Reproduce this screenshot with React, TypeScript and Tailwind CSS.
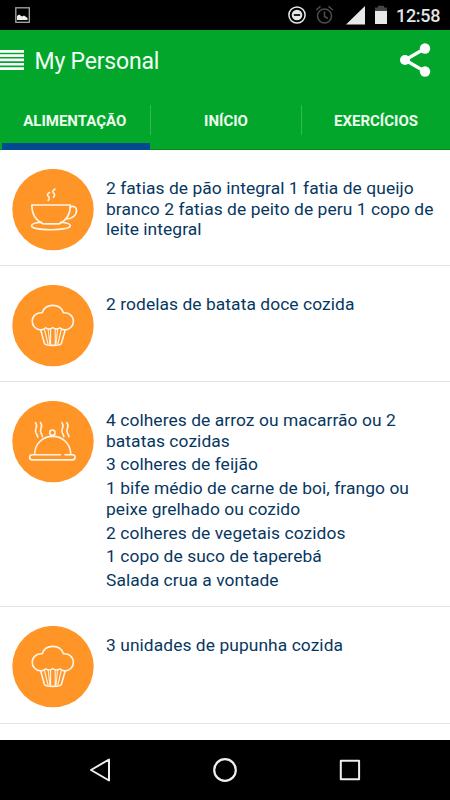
import React from 'react';

type IconName = 'cup' | 'muffin' | 'dish';

interface Meal {
  icon: IconName;
  height: string;
  lines: string[][];
}

const meals: Meal[] = [
  {
    icon: 'cup',
    height: 'h-[116px] pt-[19px]',
    lines: [['2 fatias de pão integral 1 fatia de queijo', 'branco 2 fatias de peito de peru 1 copo de', 'leite integral']],
  },
  { icon: 'muffin', height: 'h-[116px] pt-[19px]', lines: [['2 rodelas de batata doce cozida']] },
  {
    icon: 'dish',
    height: 'h-[225px] pt-[19px]',
    lines: [
      ['4 colheres de arroz ou macarrão ou 2', 'batatas cozidas'],
      ['3 colheres de feijão'],
      ['1 bife médio de carne de boi, frango ou', 'peixe grelhado ou cozido'],
      ['2 colheres de vegetais cozidos'],
      ['1 copo de suco de taperebá'],
      ['Salada crua a vontade'],
    ],
  },
  { icon: 'muffin', height: 'h-[117px] pt-[19px]', lines: [['3 unidades de pupunha cozida']] },
];

function MealIcon({ name }: { name: IconName }) {
  return (
    <svg
      viewBox="0 0 82 82"
      className="h-[82px] w-[82px] shrink-0"
      fill="none"
      stroke="#fff4e6"
      strokeWidth="1.6"
      strokeLinecap="round"
      strokeLinejoin="round"
    >
      <circle cx="41" cy="40.600" r="40.700" fill="#ff9526" stroke="none" />
      {name === 'cup' && (
        <>
          <path d="M19.800 36h38.600c0 9.500-4.700 16-11.500 18.900H31.300C24.500 52 19.800 45.500 19.800 36z" />
          <path d="M58 38.300c3-1.800 6.500-.8 6.500 3.200 0 5-4.500 8.500-11 8.500" />
          <path d="M29.500 53.200c-5.500.4-9.900 1.600-9.900 3.500 0 2.500 8.700 4 19.400 4s19.400-1.500 19.400-4c0-1.900-4.300-3.100-9.800-3.500" />
          <path d="M37.600 23.500c-2.800 1.600-2.500 2.800-1.200 3.900s1.200 2.500-.2 4" />
          <path d="M42.900 20.200c-2.800 1.600-2.500 2.800-1.200 3.900s1.200 2.500-.2 4" />
        </>
      )}
      {name === 'muffin' && (
        <>
          <path d="M28 44.800C23.500 44.300 20.200 40.700 20.200 36.200c0-5.200 4.600-9 10-8.400C31.500 23.500 35.500 20.400 40.800 20.400S50.100 23.500 51.400 27.800c5.500-.6 10 3.200 10 8.400 0 4.500-3.200 8.100-7.700 8.600-2.600.3-4.600-.6-5.900-2-2.200 1.500-4.900 1.500-7-.3-2.200 1.800-4.900 1.800-7 .3-1.300 1.400-3.200 2.300-5.800 2z" />
          <path d="M28.700 45l3.700 13.300c.8 2.800 16.200 2.800 17 0L53.200 45" />
          <path d="M32.500 44.500l3.500 14.500M36.200 44l1.600 15M38.600 43.500v16.500M43.200 43.500v16.500M45.600 44l-1.600 15M49.300 44.500l-3.500 14.500" strokeWidth="1.100" />
        </>
      )}
      {name === 'dish' && (
        <>
          <path d="M22.700 53.500c0-10.500 7.700-18.100 18-18.100s18 7.600 18 18.100" />
          <circle cx="40.400" cy="31.700" r="2.700" />
          <path d="M53 53.700h7.500a2.600 2.600 0 0 1 0 5.200H20.200a2.600 2.600 0 0 1 0-5.200H48.500" />
          <path d="M23.500 21.700c3.800 4.500-2.200 6 .6 10.500 1 1.500 1.500 2.500 1.700 4M28.500 21.700c3.800 4.500-2.200 6 .6 10.500 1 1.500 1.300 2.200 1.300 3.500" />
          <path d="M49.900 21.700c3.800 4.500-2.200 6 .6 10.500 1 1.500 1.300 2.200 1.300 3.500M54.900 21.700c3.800 4.500-2.200 6 .6 10.500 1 1.500 1.300 2.200 1.300 3.500" />
        </>
      )}
    </svg>
  );
}

function StatusBar() {
  return (
    <div className="flex h-[30px] items-center bg-black">
      <svg viewBox="0 0 450 30" className="h-[30px] w-[394px] shrink-0" preserveAspectRatio="xMinYMin slice">
        <rect x="15.800" y="7.800" width="13.500" height="14.500" fill="none" stroke="#a9a9a9" strokeWidth="1.300" />
        <path d="M17 20v-4l2-1.500 3 2 2-1 3.500 2.500v2z" fill="#eee" />
        <circle cx="297" cy="15" r="8.100" fill="none" stroke="#e8e8e8" strokeWidth="1.500" />
        <circle cx="297" cy="15" r="5.300" fill="#e8e8e8" />
        <path d="M293.800 15h6.400" stroke="#000" strokeWidth="1.700" />
        <g fill="none" stroke="#4c4c4c" strokeWidth="1.600">
          <circle cx="324.500" cy="16" r="7" />
          <path d="M324.500 11.500v5l3.300 2M316.200 10l4.300-3.600M332.800 10l-4.300-3.600" />
        </g>
        <path d="M346 24.600L365 6v18.600z" fill="#e8e8e8" />
        <path d="M375 11V7.500h3V5.700h6v1.800h3v3.500z" fill="#454545" />
        <path d="M375 11h12v13h-12z" fill="#e8e8e8" />
      </svg>
      <span className="ml-[2px] mt-[2px] whitespace-nowrap text-[18px] font-medium leading-[28px] tracking-[-0.300px] text-[#e4e4e4]">12:58</span>
    </div>
  );
}

export default function App() {
  return (
    <div className="flex h-[800px] w-[450px] flex-col overflow-hidden bg-white font-[Roboto,sans-serif]">
      <StatusBar />
      <header className="flex h-[120px] shrink-0 flex-col border-b border-[#078a1b] bg-[#02a62b]">
        <div className="flex h-[60px] items-center">
          <svg viewBox="0 0 24 20" className="h-5 w-6" fill="#fff">
            <path d="M0 0h24v2.700H0zM0 4.300h24v2.700H0zM0 8.600h24v2.700H0zM0 13h24v2.600H0zM0 17.300h24V20H0z" />
          </svg>
          <h1 className="ml-[10.500px] mt-[3px] whitespace-nowrap text-[23px] leading-[57px] tracking-[-0.200px] text-[#f4fff5]">My Personal</h1>
          <svg viewBox="0 0 32 36" className="ml-auto mr-[19px] h-9 w-8" fill="#fff">
            <path d="M26 6.500L6 18l20 11.500" fill="none" stroke="#fff" strokeWidth="3.300" />
            <circle cx="6" cy="18" r="5" />
            <circle cx="26" cy="6.500" r="5.200" />
            <circle cx="26" cy="29.500" r="5.200" />
          </svg>
        </div>
        <nav className="grid h-[60px] grid-cols-3 text-center text-[15px] font-bold leading-[62px] text-[#edfbee]">
          <div className="ml-[1.500px] h-[60px] border-b-[7px] border-[#034a91]"><span className="-ml-[2px]">ALIMENTAÇÃO</span></div>
          <div className="-mr-[2px] flex h-[60px] items-center">
            <i className="h-[30px] w-px bg-[#39b84f]" />
            <span className="flex-1 pt-[2px]">INÍCIO</span>
            <i className="h-[30px] w-px bg-[#39b84f]" />
          </div>
          <div className="pl-[2px]">EXERCÍCIOS</div>
        </nav>
      </header>
      <main className="min-h-0 flex-1 overflow-hidden">
        {meals.map((meal, i) => (
          <section key={i} className={`flex border-b border-[#e3e3e3] pl-3 ${meal.height}`}>
            <MealIcon name={meal.icon} />
            <div className="ml-[12px] mt-[9px] flex flex-col gap-[3px] whitespace-nowrap text-[17.400px] leading-[20.700px] tracking-[0.070px] text-[#07375f]">
              {meal.lines.map((paragraph, j) => (
                <p key={j}>
                  {paragraph.map((line) => (
                    <span key={line} className="block">{line}</span>
                  ))}
                </p>
              ))}
            </div>
          </section>
        ))}
      </main>
      <footer className="flex h-[60px] shrink-0 justify-center bg-black">
        <svg viewBox="0 0 320 60" className="h-[60px] w-[320px]" fill="none" stroke="#eee" strokeWidth="2" strokeLinejoin="round">
          <path d="M44 19.500v21L26 30z" />
          <circle cx="160" cy="30" r="10.800" strokeWidth="2.200" />
          <rect x="275.800" y="20.800" width="18.300" height="18.500" />
        </svg>
      </footer>
    </div>
  );
}
